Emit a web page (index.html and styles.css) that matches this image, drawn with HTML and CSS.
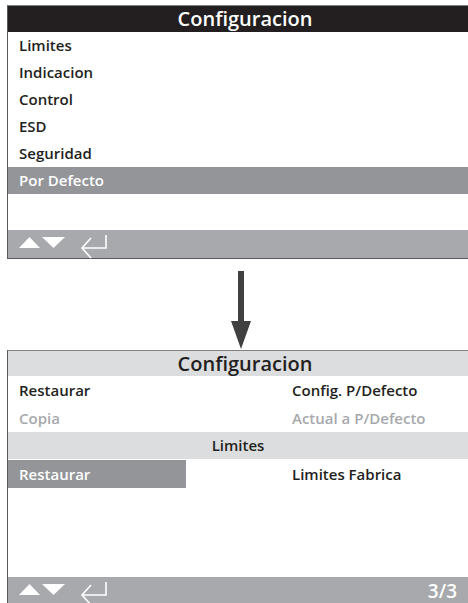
FILE: index.html
```html
<!DOCTYPE html>
<html lang="es">
<head>
    <meta charset="UTF-8" />
    <title>Configuracion</title>
    <link rel="stylesheet" href="styles.css">
</head>
<body>
    <div class="screen screen-top">
        <div class="title title-dark">Configuracion</div>
        <ul class="menu">
            <li>Limites</li>
            <li>Indicacion</li>
            <li>Control</li>
            <li>ESD</li>
            <li>Seguridad</li>
            <li class="selected">Por Defecto</li>
        </ul>
        <div class="blank blank-top"></div>
        <div class="footer">
            <svg class="nav-icons" width="100" height="28" viewBox="0 0 100 28">
                <polygon points="11,18 21.5,7 32,18" fill="#fff" />
                <polygon points="34,7 57,7 45.5,18" fill="#fff" />
                <polyline points="98,5 98,18 74,18" fill="none" stroke="#fff" stroke-width="1.6" />
                <polyline points="83,8 74,18 83,28" fill="none" stroke="#fff" stroke-width="1.6" />
            </svg>
        </div>
    </div>

    <div class="flow-arrow">
        <svg width="20" height="80" viewBox="0 0 20 80">
            <rect x="7" y="0" width="6" height="54" fill="#404041" />
            <polygon points="0,50 20,50 10,78" fill="#404041" />
        </svg>
    </div>

    <div class="screen screen-bottom">
        <div class="title title-light">Configuracion</div>
        <div class="grid">
            <div class="cell">Restaurar</div>
            <div class="cell right">Config. P/Defecto</div>
            <div class="cell disabled">Copia</div>
            <div class="cell right disabled">Actual a P/Defecto</div>
            <div class="section">Limites</div>
            <div class="cell selected">Restaurar</div>
            <div class="cell right">Limites Fabrica</div>
        </div>
        <div class="blank blank-bottom"></div>
        <div class="footer">
            <svg class="nav-icons" width="100" height="28" viewBox="0 0 100 28">
                <polygon points="11,18 21.5,7 32,18" fill="#fff" />
                <polygon points="34,7 57,7 45.5,18" fill="#fff" />
                <polyline points="98,5 98,18 74,18" fill="none" stroke="#fff" stroke-width="1.6" />
                <polyline points="83,8 74,18 83,28" fill="none" stroke="#fff" stroke-width="1.6" />
            </svg>
            <span class="page">3/3</span>
        </div>
    </div>
</body>
</html>
```

FILE: styles.css
```css
* {
    margin: 0;
    padding: 0;
    box-sizing: border-box;
}

body {
    background: #fff;
    font-family: 'Open Sans', 'Liberation Sans', sans-serif;
    font-weight: 600;
    color: #231f20;
    width: 468px;
    overflow: hidden;
}

.screen {
    margin-left: 7px;
    border-left: 1px solid #58595b;
    border-top: 1px solid #808285;
}

.screen-top {
    margin-top: 5px;
    border-bottom: 1px solid #58595b;
}

.title {
    height: 26px;
    font-size: 20px;
    line-height: 26px;
    text-align: center;
    padding-left: 14px;
}

.title-dark {
    background: #231f20;
    color: #fff;
}

.title-light {
    background: #dcddde;
    color: #231f20;
    height: 25px;
    line-height: 25px;
}

.menu {
    list-style: none;
}

.menu li {
    height: 27px;
    line-height: 27px;
    font-size: 15px;
    padding-left: 11px;
}

.menu li.selected,
.cell.selected {
    background: #939598;
    color: #fff;
}

.blank-top {
    height: 36px;
}

.blank-bottom {
    height: 89px;
}

.footer {
    height: 28px;
    background: #a7a9ac;
    display: flex;
    align-items: center;
    justify-content: space-between;
    padding-right: 11px;
}

.nav-icons {
    display: block;
    overflow: visible;
}

.page {
    color: #fff;
    font-size: 19px;
}

.flow-arrow {
    height: 91px;
    padding-top: 12px;
    padding-left: 231px;
}

.flow-arrow svg {
    display: block;
}

.grid {
    display: grid;
    grid-template-columns: 178px 1fr;
    grid-auto-rows: 28px;
}

.cell {
    font-size: 15px;
    line-height: 28px;
    padding-left: 11px;
}

.cell.right {
    padding-left: 106px;
}

.cell.disabled {
    color: #a7a9ac;
}

.section {
    grid-column: 1 / 3;
    background: #dcddde;
    font-size: 15px;
    line-height: 27px;
    height: 27px;
    text-align: center;
}
```
